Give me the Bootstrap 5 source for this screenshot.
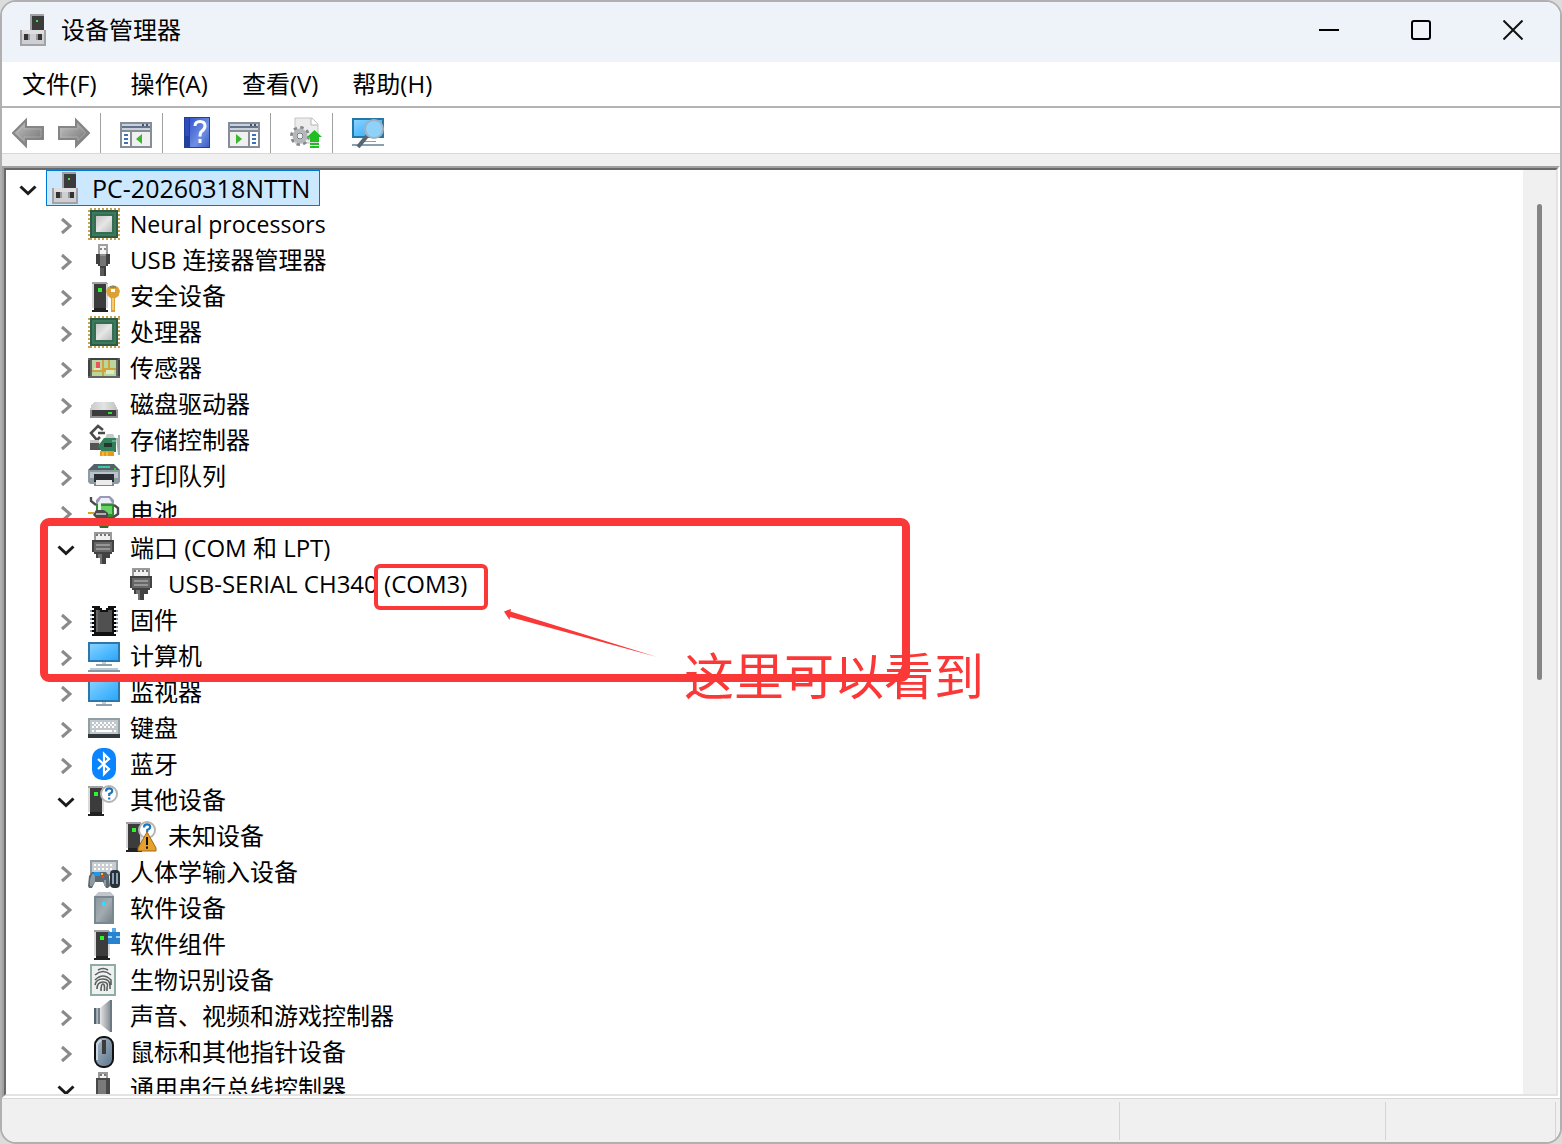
<!DOCTYPE html>
<html lang="zh-CN">
<head>
<meta charset="utf-8">
<meta name="viewport" content="width=device-width, initial-scale=1">
<title>设备管理器</title>
<link rel="stylesheet" href="https://cdn.jsdelivr.net/npm/bootstrap@5.3.0/dist/css/bootstrap.min.css">
<style>
  body { background: #dcdcdc; color: #000; font-family: "Open Sans", "Noto Sans CJK SC", sans-serif; font-size: 24px; line-height: 36px; }
  button { color: inherit; }
  svg { display: block; flex: none; }
  .app-window { border: 2px solid #b0b0b0; border-radius: 16px; background: #fff; }
  .title-bar { height: 60px; background: #eef3fa; padding: 0 1px 4px 16px; }
  .title-text { margin-left: 11px; }
  .plain-btn { border: 0; background: none; padding: 0; }
  .caption-btn { width: 92px; height: 56px; }
  .menu-bar { height: 46px; border-bottom: 2px solid #b4b4b4; padding-left: 3px; }
  .menu-item { padding: 0 17px; white-space: nowrap; }
  .tool-bar { height: 46px; padding: 4px 10px 0; border-bottom: 1px solid #d9d9d9; }
  .tool-group { gap: 14px; }
  .tool-sep { width: 1px; height: 40px; background: #a0a0a0; margin: 0 19px 0 10px; }
  .strip { height: 12px; background: #f0f0f0; }
  .tree-outer { border: 2px solid; border-color: #a0a0a0 #fff #fff #a0a0a0; min-height: 0; }
  .tree-inner { border: 2px solid; border-color: #696969 #e3e3e3 #e3e3e3 #696969; }
  .tree-row { height: 36px; padding-left: 6px; }
  .level-1 { padding-left: 44px; }
  .level-2 { padding-left: 82px; }
  .expander { width: 32px; height: 36px; margin-right: 2px; color: #8a8a8a; }
  .expander[aria-expanded="true"] { color: #1b1b1b; }
  .tree-item { height: 36px; border: 1px solid transparent; padding: 0 9px 0 3px; white-space: nowrap; }
  .tree-item.selected { background: #cce8ff; border-color: #0078d7; }
  .tree-label { margin-left: 10px; line-height: 34px; }
  .label-caps { font-size: 25px; }
  .label-words { font-size: 23px; }
  .scroll-track { width: 33px; background: #f0f0f0; padding: 34px 14px 0 14px; }
  .scroll-thumb { width: 5px; height: 476px; border-radius: 3px; background: #858585; }
  .status-bar { height: 44px; background: #f0f0f0; border-top: 1px solid #d7d7d7; padding: 3px 4px 2px 0; border-radius: 0 0 14px 14px; }
  .status-cell { border-right: 1px solid #d4d4d4; }
  .status-mid { width: 266px; }
  .status-end { width: 170px; }
  .note-box { border: 8px solid #fb3838; border-radius: 9px; left: 36px; top: 350px; width: 870px; height: 164px; pointer-events: none; }
  .note-small { border: 4px solid #fb3838; border-radius: 6px; left: 370px; top: 396px; width: 114px; height: 46px; pointer-events: none; }
  .note-arrow { left: 492px; top: 435px; pointer-events: none; }
  .note-text { left: 680px; top: 472px; color: #fb3838; font-size: 50px; line-height: 72px; white-space: nowrap; }
</style>
<script src="https://cdn.jsdelivr.net/npm/bootstrap@5.3.0/dist/js/bootstrap.bundle.min.js"></script>
</head>
<body class="m-0">
<svg width="0" height="0" class="position-absolute" aria-hidden="true">
  <defs>
    <linearGradient id="gScreen" x1="0" y1="0" x2="1" y2="1"><stop offset="0" stop-color="#8ad2ff"/><stop offset=".5" stop-color="#56bdff"/><stop offset="1" stop-color="#2aa6fb"/></linearGradient>
    <linearGradient id="gSilver" x1="0" y1="0" x2="1" y2="1"><stop offset="0" stop-color="#c4c4c4"/><stop offset=".5" stop-color="#e6e6e6"/><stop offset="1" stop-color="#bdbdbd"/></linearGradient>
    <linearGradient id="gArrow" x1="0" y1="0" x2="1" y2="1"><stop offset="0" stop-color="#c6c6c6"/><stop offset="1" stop-color="#6e6e6e"/></linearGradient>
    <linearGradient id="gHelp" x1="0" y1="0" x2="1" y2="1"><stop offset="0" stop-color="#3558c8"/><stop offset=".6" stop-color="#6f8fe6"/><stop offset="1" stop-color="#3c5cc4"/></linearGradient>
    <linearGradient id="gTower" x1="0" y1="0" x2="1" y2="1"><stop offset="0" stop-color="#8e99a1"/><stop offset=".5" stop-color="#a1abb1"/><stop offset="1" stop-color="#78838b"/></linearGradient>
    <linearGradient id="gSpeak" x1="0" x2="1"><stop offset="0" stop-color="#6e7d86"/><stop offset=".35" stop-color="#e0e2e3"/><stop offset=".7" stop-color="#a9adb0"/><stop offset="1" stop-color="#76838b"/></linearGradient>
    <linearGradient id="gMouse" x1="0" y1="0" x2="1" y2="1"><stop offset="0" stop-color="#a9bccb"/><stop offset="1" stop-color="#5d7388"/></linearGradient>
    <linearGradient id="gDisk" x1="0" x2="1"><stop offset="0" stop-color="#c9c9c9"/><stop offset=".5" stop-color="#e3e3e3"/><stop offset="1" stop-color="#bfbfbf"/></linearGradient>

    <symbol id="chev-right" viewBox="0 0 32 32"><path d="M12 9l8 7-8 7" fill="none" stroke="currentColor" stroke-width="3"/></symbol>
    <symbol id="chev-down" viewBox="0 0 32 32"><path d="M8.500 12.500l7.500 7 7.500-7" fill="none" stroke="currentColor" stroke-width="3"/></symbol>

    <symbol id="i-pc" viewBox="0 0 16 16" shape-rendering="crispEdges">
      <path fill="#a2a2a6" d="M6 0h7v8H6z"/><path fill="#3b3b3b" d="M7 1h6v7H7z"/><path fill="#3fe83f" d="M9 3h1v1H9z"/>
      <path fill="#a3a3a6" d="M1 8h13v8H1z"/><path fill="#dedee1" d="M2 8h11v2H2z"/><path fill="#cfcfd3" d="M2 10h11v5H2z"/><path fill="#98989a" d="M3 10h3v3H3zM9 10h3v3H9z"/><path fill="#333" d="M3 10h2v3H3zM10 10h2v3h-2z"/>
    </symbol>
    <symbol id="i-chip" viewBox="0 0 16 16" shape-rendering="crispEdges">
      <path d="M.5 1v15M15.500 1v15M1 .5h15M1 15.500h15" stroke="#c9a24f" stroke-width="1" stroke-dasharray="1 1"/>
      <path fill="#2b5a45" d="M1 1h14v14H1z"/><path fill="#3c7a5d" d="M2 2h12v12H2z"/><path fill="#356c52" d="M3 3h10v10H3z"/><path fill="url(#gSilver)" d="M4 4h8v8H4z"/>
    </symbol>
    <symbol id="i-usb" viewBox="0 0 16 16" shape-rendering="crispEdges">
      <path fill="#a0a0a0" d="M5 0h5v5H5z"/><path fill="#f4f4f4" d="M6 1h3v4H6z"/><path fill="#8a8a8a" d="M6 2h1v1H6zM8 2h1v1H8z"/>
      <path fill="#404040" d="M4 5h7v5h-1v1H9v1H6v-1H5v-1H4z"/><path fill="#747474" d="M6 5h3v6H6z"/><path fill="#909090" d="M6 5h3v1H6z"/><path fill="#5a5a5a" d="M6 12h3v4H6z"/><path fill="#3a3a3a" d="M8 12h1v4H8z"/>
    </symbol>
    <symbol id="i-tower" viewBox="0 0 8 15" shape-rendering="crispEdges">
      <path fill="#a2a2a6" d="M0 0h7l1 1v12H0z"/><path fill="#dadade" d="M0 1h1v12H0zM7 1h1v12H7z"/><path fill="#3c3c3c" d="M1 1h6v12H1z"/><path fill="#2df52d" d="M3 3h2v2H3z"/><path fill="#222" d="M1 13h6v1h1v1H0v-1h1z"/>
    </symbol>
    <symbol id="i-secure" viewBox="0 0 16 16"><use href="#i-tower" x="2" y="1" width="8" height="15"/>
      <path fill="#dca136" fill-rule="evenodd" d="M12.500 2.500L15 3.500l1 2-.7 2.500-1.800 1.200V16h-2V9.200L9.700 7.800 9 5.500l1-2zM11.500 4.500v1.500h2V4.500z"/><path fill="#f4cb70" d="M12 9h1v6h-1z"/><path fill="#8d8b62" d="M11 3h3v1h-3z"/>
    </symbol>
    <symbol id="i-sensor" viewBox="0 0 16 16" shape-rendering="crispEdges">
      <path fill="#646464" d="M0 3h16v10H0z"/><path fill="#424242" d="M0 4h1v8H0zM15 4h1v8h-1zM1 3h14v1H1z"/><path fill="#b9d79d" d="M2 4h12v8H2z"/><path fill="#dcebc5" d="M9 8h4v3H9zM3 8h3v2H3z"/><path fill="#d0a33d" d="M7 4h1v8H7zM2 9h6V8h6v1H9v1H2zM10 4h1v4h-1z"/><path fill="#ef5260" d="M4 5h2v3H4z"/>
    </symbol>
    <symbol id="i-disk" viewBox="0 0 16 16" shape-rendering="crispEdges">
      <path fill="url(#gDisk)" d="M3 7h10l2 4H1l1-3z"/><path fill="#8e8e8e" d="M1 11h14v4H1z"/><path fill="#3b3b3b" d="M2 11h12v3H2z"/><path fill="#35dc35" d="M10 12h2v1h-2z"/>
    </symbol>
    <symbol id="i-storage" viewBox="0 0 16 16">
      <path d="M7.500 3L5 1 1.500 4.500 4.500 8 6 6.500M5 4.500h3.500" fill="none" stroke="#4a4a4a" stroke-width="1.300"/><path d="M1 9.500h4.500L7 13H1z" fill="#545454"/><path d="M1 8h4l1 1.500H1z" fill="#c9c9c9"/>
      <path d="M8 7h6v7H7l-2-3z" fill="#327d5a"/><path d="M9.500 5h3l1 2h-5z" fill="#c4c8c8"/><path d="M8 9.500h4v2H8z" fill="#24382d"/><path d="M12 8h2v1h-2z" fill="#61b18b"/><path d="M6 13.500h7V16H6z" fill="#e59b18"/><path d="M7.500 14v2M9.500 14v2" stroke="#ffca4a" stroke-width=".6"/><path d="M14 7h1v-1.500h1v10h-1z" fill="#a8afb3"/>
    </symbol>
    <symbol id="i-printer" viewBox="0 0 16 16">
      <path fill="#55616a" d="M3 2h10l3 3H0z"/><path fill="#3ac9a0" d="M5 3h6v1H5z"/><path fill="#8f9ba3" d="M0 5h16v6l-1 1H1l-1-1z"/><path fill="#bac4ca" d="M1 6h14v3H1z"/><path fill="#2b2f33" d="M3 7h10v4H3z"/><path fill="#7a858d" d="M3 12h10v1H3z"/><path fill="#ececec" d="M4 10h8v2.500H4z"/><path fill="#18e618" d="M13 4h1v1h-1z"/>
    </symbol>
    <symbol id="i-battery" viewBox="0 0 16 16">
      <path fill="#9a97bb" d="M6 0h5l2 2v2H4V2z"/><path fill="#eeeef8" d="M6.500 1h4l1.500 2.500H5z"/><path fill="#318d31" d="M4 4h9v6l-2 1H6L4 9z"/><path fill="#67d367" d="M6 5h6v4H6z"/><path fill="#e4f6e4" d="M5 3h1.500v5H5z"/>
      <path d="M1.500 .5v2L4 4.500M13 4.500l2 1.500v3l-3 2-3 .5" fill="none" stroke="#4b4b4b" stroke-width="1.200"/><path fill="#4a4a4a" d="M4 7h4l2 1.500V11l-3 1H5L2.500 9.500z"/><path fill="#b0b0b0" d="M4 8.500h5v1H4z"/><path fill="#d9a514" d="M0 8h3v1H0z"/><path fill="#2f6d24" d="M5 13.500h6L10 16H6z"/>
    </symbol>
    <symbol id="i-port" viewBox="0 0 16 16" shape-rendering="crispEdges">
      <path fill="#999" d="M3 0h9v5H3z"/><path fill="#f0f0f0" d="M4 1h7v3H4z"/><path fill="#777" d="M4 1h1v1H4zM6 1h1v1H6zM8 1h1v1H8zM10 1h1v1h-1z"/><path fill="#424242" d="M2 4h11v6h-1v1h-1v2H9v3H6v-3H4v-2H3v-1H2z"/><path fill="#666" d="M3 5h9v5H3z"/><path fill="#969696" d="M4 6h7v1H4zM4 8h7v1H4z"/><path fill="#727272" d="M5 11h2v2H5zM6 13h1v3H6z"/>
    </symbol>
    <symbol id="i-firm" viewBox="0 0 16 16" shape-rendering="crispEdges">
      <path d="M1.500 3v12M14.500 3v12" stroke="#8497a8" stroke-width="1" stroke-dasharray="1 1"/><path d="M2.500 3v12M13.500 3v12" stroke="#000" stroke-width="1" stroke-dasharray="1 1"/><path fill="#111" d="M2 1h4v1h1v1h2V2h1V1h4v1h-1v13h1v1H2v-1h1V2H2z"/><path fill="#505050" d="M4 3h2v1h4V3h2v11H4z"/><path fill="#686868" d="M4 3h1v11H4z"/>
    </symbol>
    <symbol id="i-computer" viewBox="0 0 16 16" shape-rendering="crispEdges">
      <path fill="#2e78a9" d="M0 1h16v10H0z"/><path fill="url(#gScreen)" d="M1 2h14v8H1z"/><path fill="#c3ced6" d="M7 11h2v1H7z"/><path fill="#8ca0ae" d="M4 12h8v1H4z"/><path fill="#bdc9d2" d="M1 14h14v1H1z"/><path fill="#8599a8" d="M0 15h16v1H0z"/>
    </symbol>
    <symbol id="i-monitor" viewBox="0 0 16 16" shape-rendering="crispEdges">
      <path fill="#2e78a9" d="M0 1h16v12H0z"/><path fill="url(#gScreen)" d="M1 2h14v10H1z"/><path fill="#c3ced6" d="M7 13h2v1H7z"/><path fill="#8ca0ae" d="M4 14h8v1H4z"/>
    </symbol>
    <symbol id="i-keyboard" viewBox="0 0 16 16" shape-rendering="crispEdges">
      <path fill="#929da4" d="M0 3h16v9H0z"/><path fill="#c1c8cc" d="M1 4h14v7H1z"/><path d="M2 5.500h12M2 7.500h12" stroke="#fff" stroke-width="1" stroke-dasharray="1 1"/><path d="M3 6.500h11" stroke="#f4f4f4" stroke-dasharray="1 1"/><path fill="#fff" d="M4 9h8v1H4zM2 9h1v1H2zM13 9h1v1h-1z"/><path fill="#30383d" d="M0 11h16v2H0z"/>
    </symbol>
    <symbol id="i-bt" viewBox="0 0 16 16"><rect x="2" width="12" height="16" rx="5" fill="#0a84ff"/><path d="M5 5.500l5.500 5L8 13V3l2.500 2.500-5.500 5" fill="none" stroke="#fff" stroke-width="1.100"/></symbol>
    <symbol id="i-other" viewBox="0 0 16 16"><use href="#i-tower" x="0" y="1" width="8" height="15"/><circle cx="10.500" cy="5" r="4" fill="#fff" stroke="#b4b4b4"/><path d="M9 3.700q0-1.500 1.600-1.500T12.100 3.500q0 .9-1.500 1.500v1M10.600 6.700v1.100" fill="none" stroke="#1c76bd" stroke-width="1.100"/></symbol>
    <symbol id="i-unknown" viewBox="0 0 16 16"><use href="#i-other" width="16" height="16"/><path d="M10.500 6L15 14v1.500H6V14z" fill="#e8a02c" stroke="#9c6a14" stroke-width=".5"/><path d="M10 8.500h1v4h-1zM10 13.200h1v1.200h-1z" fill="#111"/></symbol>
    <symbol id="i-hid" viewBox="0 0 16 16">
      <path fill="#929da4" d="M1 2h14v8H1z"/><path fill="#c8ced1" d="M2 3h12v6H2z"/><path d="M3 4.500h10M3 6.500h10" stroke="#fff" stroke-dasharray="1 1"/>
      <path fill="#5d6970" d="M2 8h7l1.500 2 .5 5-1 1H9l-1.500-3h-4L2 16H.5L0 15l.5-5z"/><path fill="#8f9aa1" d="M2 9h1.500v4L2 15H1v-3zM8 12h1v3H8z"/><path fill="#1a9af2" d="M3 8h3v2H3z"/><path fill="#efc231" d="M6.500 8.500h1v1h-1z"/><path fill="#e5482e" d="M7 10h1v1H7z"/>
      <rect x="11" y="7" width="5" height="9" rx="2" fill="#27313a"/><path fill="#8ba0b2" d="M12 8.500h1V14h-1zM14 8.500h1V14h-1z"/>
    </symbol>
    <symbol id="i-softdev" viewBox="0 0 16 16" shape-rendering="crispEdges"><path fill="#c0c6ca" d="M5 0h6l2 2H3z"/><path fill="#798790" d="M3 2h10v14H3z"/><path fill="url(#gTower)" d="M4 3h8v12H4z"/><path fill="#5ccfdb" d="M7 5h2v2H7z"/><path fill="#18e6ff" d="M8 5h1v2H8z"/></symbol>
    <symbol id="i-softcomp" viewBox="0 0 16 16" shape-rendering="crispEdges"><use href="#i-tower" x="3" y="1" width="8" height="15"/><path fill="#2783cf" d="M12 0h2v2h2v6h-6V2h2z"/><path fill="#5aa9e6" d="M12 0h2v2h-2z"/><path fill="#9dd1f5" d="M10 4h2v1h-2zM14 4h2v1h-2z"/></symbol>
    <symbol id="i-bio" viewBox="0 0 16 16"><path fill="#8fada6" d="M1 0h13v16H1z"/><path fill="#eef1f0" d="M2 1h11v14H2z"/><path fill="none" stroke="#5a5f5e" stroke-width=".8" d="M5 3q2.500-1.500 5 0M3.500 5.500q4-3.500 8 0M3.500 8q4-4 8 0v2.500M3.500 10.500q.5-3 4-3T11 11v1.500M4.500 12.500q0-3.500 3-3.500T9.500 12v1.500M6.500 13.500q0-3.500 1-3.500t.7 3.500"/></symbol>
    <symbol id="i-sound" viewBox="0 0 16 16"><path fill="url(#gSpeak)" d="M3 4h3l5-4h1v16h-1l-5-4H3z"/><path fill="#52616c" d="M3 4h1v8H3z"/><path fill="#6a7882" d="M11 0h1v16h-1z"/><path fill="#76838c" d="M5 4h1v8H5z"/></symbol>
    <symbol id="i-mouse" viewBox="0 0 16 16"><rect x="3.500" y=".5" width="9" height="15" rx="4" fill="url(#gMouse)" stroke="#111"/><path d="M4.500 12V4l2-2" fill="none" stroke="#c9d6e1"/><path fill="#3c3c3c" d="M7 2h2v7H7z"/></symbol>
    <symbol id="i-usbctl" viewBox="0 0 16 16" shape-rendering="crispEdges"><path fill="#999" d="M5 0h5v4H5z"/><path fill="#f3f3f3" d="M6 1h3v2H6z"/><path fill="#777" d="M6 1h1v1H6zM8 1h1v1H8z"/><path fill="#484848" d="M4 3h7v9H4z"/><path fill="#7a7a7a" d="M5 4h4v7H5z"/><path fill="#444" d="M6 12h3v4H6z"/></symbol>

    <symbol id="t-back" viewBox="0 0 32 32"><path d="M1 16L14 3v7h17v12H14v7z" fill="url(#gArrow)" stroke="#858585" stroke-width="2"/><path d="M4.500 16L12 8.500V12h17v8H12v3.500z" fill="none" stroke="#c2c2c2" stroke-opacity=".5"/></symbol>
    <symbol id="t-fwd" viewBox="0 0 32 32"><path d="M31 16L18 3v7H1v12h17v7z" fill="url(#gArrow)" stroke="#858585" stroke-width="2"/><path d="M27.500 16L20 8.500V12H3v8h17v3.500z" fill="none" stroke="#c2c2c2" stroke-opacity=".5"/></symbol>
    <symbol id="t-tree" viewBox="0 0 32 32"><path fill="#858e97" d="M0 5h32v26H0z"/><path fill="#c9d2dc" d="M2 7h28v6H2z"/><path fill="#64738c" d="M2 9h28v2H2z"/><path fill="#46546b" d="M22 7h2v2h-2zM26 7h2v2h-2z"/><path fill="#fff" d="M2 15h8v14H2z"/><path fill="#f0f0f0" d="M12 15h18v14H12z"/><path fill="#3d72b4" d="M4 17h4v2H4zM4 21h4v2H4zM4 25h4v2H4z"/><path fill="#3cb62f" d="M22 17v10l-6-5z"/></symbol>
    <symbol id="t-action" viewBox="0 0 32 32"><path fill="#858e97" d="M0 5h32v26H0z"/><path fill="#c9d2dc" d="M2 7h28v6H2z"/><path fill="#64738c" d="M2 9h28v2H2z"/><path fill="#46546b" d="M22 7h2v2h-2zM26 7h2v2h-2z"/><path fill="#f0f0f0" d="M2 15h18v14H2z"/><path fill="#fff" d="M22 15h8v14h-8z"/><path fill="#3d72b4" d="M24 17h4v2h-4zM24 21h4v2h-4zM24 25h4v2h-4z"/><path fill="#3cb62f" d="M8 17v10l6-5z"/></symbol>
    <symbol id="t-help" viewBox="0 0 32 32"><path fill="#20409c" d="M2 0h26v31H2z"/><path fill="url(#gHelp)" d="M8 1h19v29H8z"/><path fill="#2c4dbb" d="M3 1h4v18H3z"/><path d="M13 9q0-4.500 5-4.500t5 4.500q0 3-3.500 5.500-1.500 1-1.500 5M18 22v4" fill="none" stroke="#fff" stroke-width="3"/></symbol>
    <symbol id="t-update" viewBox="0 0 32 32"><path d="M5 1h17l6 6v19H5z" fill="#ececec" stroke="#c4c4c4"/><path d="M21 1v7h7" fill="#fff" stroke="#b4b4b4"/><circle cx="10" cy="19" r="8" fill="none" stroke="#85898c" stroke-width="4" stroke-dasharray="3.200 3.083"/><circle cx="10" cy="19" r="5.500" fill="none" stroke="#b4b8ba" stroke-width="4"/><circle cx="10" cy="19" r="3" fill="#f1f1f1" stroke="#70767a"/><path fill="#22bd22" d="M24.500 13l7.500 7h-3v5h-9v-5h-3zM20 26h9v2h-9zM20 29h9v2h-9z"/></symbol>
    <symbol id="t-scan" viewBox="0 0 32 32"><path fill="#2577a8" d="M0 1h32v20H0z"/><path fill="url(#gScreen)" d="M2 3h28v16H2z"/><path fill="#8ba0af" d="M10 24h14v1H10zM0 27h32v2H0z"/><path d="M15 19L6 30" stroke="#566674" stroke-width="4"/><circle cx="22" cy="12" r="9" fill="#8ed2fb" stroke="#9fb1bf" stroke-width="2"/></symbol>
  </defs>
</svg>

<main class="app-window vh-100 d-flex flex-column overflow-hidden">
  <header class="title-bar d-flex align-items-center flex-shrink-0">
    <svg width="32" height="32"><use href="#i-pc"/></svg>
    <span class="title-text flex-grow-1">设备管理器</span>
    <button type="button" class="plain-btn caption-btn d-flex align-items-center justify-content-center" aria-label="最小化"><svg width="20" height="20"><path d="M0 10h20" stroke="#000" stroke-width="2"/></svg></button>
    <button type="button" class="plain-btn caption-btn d-flex align-items-center justify-content-center" aria-label="最大化"><svg width="20" height="20"><rect x="1" y="1" width="18" height="18" rx="2" fill="none" stroke="#000" stroke-width="2"/></svg></button>
    <button type="button" class="plain-btn caption-btn d-flex align-items-center justify-content-center" aria-label="关闭"><svg width="20" height="20"><path d="M.5 .5l19 19M19.500 .5l-19 19" stroke="#111" stroke-width="2"/></svg></button>
  </header>
  <nav class="menu-bar d-flex align-items-center flex-shrink-0" aria-label="菜单">
    <button type="button" class="plain-btn menu-item">文件(F)</button>
    <button type="button" class="plain-btn menu-item">操作(A)</button>
    <button type="button" class="plain-btn menu-item">查看(V)</button>
    <button type="button" class="plain-btn menu-item">帮助(H)</button>
  </nav>
  <div class="tool-bar d-flex align-items-center flex-shrink-0" role="toolbar" aria-label="工具栏">
    <div class="tool-group d-flex">
      <button type="button" class="plain-btn" aria-label="后退"><svg width="32" height="32"><use href="#t-back"/></svg></button>
      <button type="button" class="plain-btn" aria-label="前进"><svg width="32" height="32"><use href="#t-fwd"/></svg></button>
    </div>
    <div class="tool-sep"></div>
    <button type="button" class="plain-btn" aria-label="显示/隐藏控制台树"><svg width="32" height="32"><use href="#t-tree"/></svg></button>
    <div class="tool-sep"></div>
    <div class="tool-group d-flex">
      <button type="button" class="plain-btn" aria-label="帮助"><svg width="32" height="32"><use href="#t-help"/></svg></button>
      <button type="button" class="plain-btn" aria-label="显示/隐藏操作窗格"><svg width="32" height="32"><use href="#t-action"/></svg></button>
    </div>
    <div class="tool-sep"></div>
    <button type="button" class="plain-btn" aria-label="更新驱动程序"><svg width="32" height="32"><use href="#t-update"/></svg></button>
    <div class="tool-sep"></div>
    <button type="button" class="plain-btn" aria-label="扫描检测硬件改动"><svg width="32" height="32"><use href="#t-scan"/></svg></button>
  </div>
  <div class="strip flex-shrink-0"></div>

  <section class="tree-outer flex-grow-1 d-flex position-relative">
    <div class="tree-inner flex-grow-1 d-flex overflow-hidden">
      <ul id="deviceTree" class="list-unstyled m-0 flex-grow-1 overflow-hidden" role="tree" aria-label="设备"></ul>
      <div class="scroll-track flex-shrink-0"><div class="scroll-thumb"></div></div>
    </div>
    <div class="note-box position-absolute"></div>
    <div class="note-small position-absolute"></div>
    <svg class="note-arrow position-absolute" width="162" height="56" aria-hidden="true"><path d="M8 8.500l7-2.500-.5 2.500L161 54 14 14l-.5 3z" fill="#fb3838"/></svg>
    <div class="note-text position-absolute">这里可以看到</div>
  </section>

  <footer class="status-bar d-flex flex-shrink-0">
    <div class="status-cell flex-grow-1"></div>
    <div class="status-cell status-mid"></div>
    <div class="status-cell status-end"></div>
  </footer>
</main>
<script>
  // level, state (open / closed / leaf), icon, label, optional label class
  const devices = [
    [0, 'open', 'pc', 'PC-20260318NTTN', 'label-caps'],
    [1, 'closed', 'chip', 'Neural processors', 'label-words'],
    [1, 'closed', 'usb', 'USB 连接器管理器'],
    [1, 'closed', 'secure', '安全设备'],
    [1, 'closed', 'chip', '处理器'],
    [1, 'closed', 'sensor', '传感器'],
    [1, 'closed', 'disk', '磁盘驱动器'],
    [1, 'closed', 'storage', '存储控制器'],
    [1, 'closed', 'printer', '打印队列'],
    [1, 'closed', 'battery', '电池'],
    [1, 'open', 'port', '端口 (COM 和 LPT)'],
    [2, 'leaf', 'port', 'USB-SERIAL CH340 (COM3)'],
    [1, 'closed', 'firm', '固件'],
    [1, 'closed', 'computer', '计算机'],
    [1, 'closed', 'monitor', '监视器'],
    [1, 'closed', 'keyboard', '键盘'],
    [1, 'closed', 'bt', '蓝牙'],
    [1, 'open', 'other', '其他设备'],
    [2, 'leaf', 'unknown', '未知设备'],
    [1, 'closed', 'hid', '人体学输入设备'],
    [1, 'closed', 'softdev', '软件设备'],
    [1, 'closed', 'softcomp', '软件组件'],
    [1, 'closed', 'bio', '生物识别设备'],
    [1, 'closed', 'sound', '声音、视频和游戏控制器'],
    [1, 'closed', 'mouse', '鼠标和其他指针设备'],
    [1, 'open', 'usbctl', '通用串行总线控制器']
  ];
  document.getElementById('deviceTree').innerHTML = devices.map(([level, state, icon, label, extra = ''], i) => {
    const open = state === 'open';
    const expander = state === 'leaf'
      ? '<span class="expander"></span>'
      : `<button type="button" class="plain-btn expander pt-1" aria-expanded="${open}" aria-label="${open ? '折叠' : '展开'}"><svg width="32" height="32"><use href="#chev-${open ? 'down' : 'right'}"/></svg></button>`;
    return `<li class="tree-row level-${level} d-flex" role="treeitem" aria-level="${level + 1}">${expander}` +
      `<div class="tree-item d-flex align-items-center${i === 0 ? ' selected' : ''}"><svg width="32" height="32"><use href="#i-${icon}"/></svg>` +
      `<span class="tree-label ${extra}">${label}</span></div></li>`;
  }).join('');
</script>
</body>
</html>
